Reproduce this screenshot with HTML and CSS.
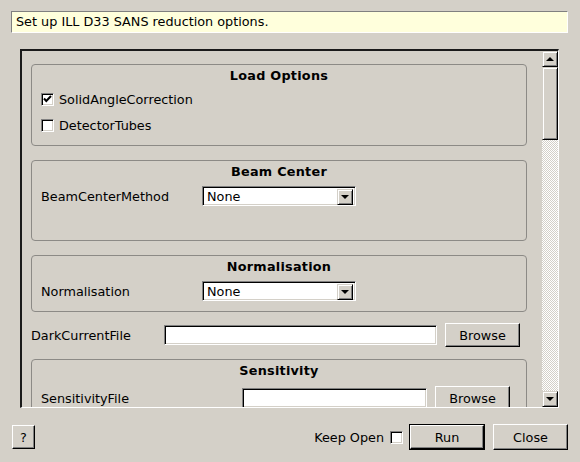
FILE: index.html
```html
<!DOCTYPE html>
<html lang="en">
<head>
    <meta charset="UTF-8">
    <title>ILL D33 SANS reduction</title>
    <link rel="stylesheet" href="styles.css">
</head>
<body>
    <div class="dialog">
        <div class="info">Set up ILL D33 SANS reduction options.</div>

        <div class="scroll">
            <div class="viewport">
                <div class="group group-load">
                    <div class="group-title">Load Options</div>
                    <label class="check-row">
                        <span class="checkbox">
                            <svg width="11" height="11" viewBox="0 0 11 11"><path d="M2 4.5 L4.3 7 L9 2" fill="none" stroke="#000" stroke-width="2"/></svg>
                        </span>
                        SolidAngleCorrection
                    </label>
                    <label class="check-row">
                        <span class="checkbox"></span>
                        DetectorTubes
                    </label>
                </div>

                <div class="group group-beam">
                    <div class="group-title">Beam Center</div>
                    <div class="field-row">
                        <span class="label label-combo">BeamCenterMethod</span>
                        <div class="combo">
                            <span class="combo-text">None</span>
                            <span class="combo-btn"><span class="arrow-down"></span></span>
                        </div>
                    </div>
                </div>

                <div class="group group-norm">
                    <div class="group-title">Normalisation</div>
                    <div class="field-row">
                        <span class="label label-combo">Normalisation</span>
                        <div class="combo">
                            <span class="combo-text">None</span>
                            <span class="combo-btn"><span class="arrow-down"></span></span>
                        </div>
                    </div>
                </div>

                <div class="file-row dark-row">
                    <span class="label label-dark">DarkCurrentFile</span>
                    <div class="line-edit edit-dark"></div>
                    <button class="btn btn-browse">Browse</button>
                </div>

                <div class="group group-sens">
                    <div class="group-title">Sensitivity</div>
                    <div class="file-row sens-row">
                        <span class="label label-sens">SensitivityFile</span>
                        <div class="line-edit edit-sens"></div>
                        <button class="btn btn-browse">Browse</button>
                    </div>
                </div>
            </div>

            <div class="scrollbar">
                <div class="sb-btn"><span class="arrow-up"></span></div>
                <div class="sb-handle"></div>
                <div class="sb-trough"></div>
                <div class="sb-btn"><span class="arrow-down"></span></div>
            </div>
        </div>

        <div class="button-bar">
            <button class="btn btn-help">?</button>
            <div class="spacer"></div>
            <span class="keep-label">Keep Open</span>
            <span class="checkbox keep-box"></span>
            <div class="default-frame"><button class="btn btn-run">Run</button></div>
            <button class="btn btn-close">Close</button>
        </div>
    </div>
</body>
</html>
```

FILE: styles.css
```css
* {
    margin: 0;
    padding: 0;
    box-sizing: border-box;
}

body {
    background: #d4d0c8;
    font-family: 'DejaVu Sans', Verdana, sans-serif;
    font-size: 12.8px;
    color: #000;
}

.dialog {
    width: 580px;
    height: 462px;
    padding: 11px 12px 0 11px;
    display: flex;
    flex-direction: column;
}

.info {
    height: 22px;
    line-height: 20px;
    padding-left: 4px;
    background: #ffffdc;
    border: 1px solid;
    border-color: #808080 #fff #fff #808080;
}

/* scroll area */
.scroll {
    margin: 16px 0 0 9px;
    width: 539px;
    height: 359px;
    display: flex;
    border-style: solid;
    border-width: 2px 1px 1px 2px;
    border-color: #1a1a1a #fff #fff #1a1a1a;
}

.viewport {
    width: 520px;
    height: 356px;
    overflow: hidden;
    padding: 13px 0 0 9px;
}

.scrollbar {
    width: 16px;
    display: flex;
    flex-direction: column;
}

.sb-btn {
    height: 16px;
    display: flex;
    align-items: center;
    justify-content: center;
    background: #d4d0c8;
    border: 1px solid;
    border-color: #d4d0c8 #000 #000 #d4d0c8;
    box-shadow: inset 1px 1px #fff, inset -1px -1px #808080;
}

.sb-handle {
    height: 73px;
    background: #d4d0c8;
    border: 1px solid;
    border-color: #d4d0c8 #000 #000 #d4d0c8;
    box-shadow: inset 1px 1px #fff, inset -1px -1px #808080;
}

.sb-trough {
    flex: 1;
    background: repeating-conic-gradient(#fff 0 25%, #d4d0c8 0 50%) 0 0 / 2px 2px;
}

.arrow-up,
.arrow-down {
    width: 0;
    height: 0;
    border-left: 4px solid transparent;
    border-right: 4px solid transparent;
}

.arrow-up {
    border-bottom: 4px solid #000;
}

.arrow-down {
    border-top: 4px solid #000;
}

/* group boxes */
.group {
    width: 496px;
    border: 1px solid #8c8a86;
    border-radius: 4px;
    padding: 2px 0 0 9px;
}

.group-title {
    text-align: center;
    font-weight: bold;
    letter-spacing: 0.25px;
    line-height: 15px;
    padding-top: 1px;
    margin: 0 0 -1px -9px;
}

.group-load {
    height: 82px;
}

.group-beam {
    height: 81px;
    margin-top: 14px;
}

.group-norm {
    height: 57px;
    margin-top: 14px;
}

.group-sens {
    height: 90px;
    margin-top: 12px;
}

.check-row {
    display: flex;
    align-items: center;
    height: 26px;
    gap: 5px;
}

.check-row:first-of-type {
    margin-top: 4px;
}

.checkbox {
    width: 13px;
    height: 13px;
    background: #fff;
    border: 1px solid;
    border-color: #808080 #fff #fff #808080;
    box-shadow: inset 1px 1px #000, inset -1px -1px #d4d0c8;
    display: flex;
    align-items: center;
    justify-content: center;
}

.checkbox svg {
    display: block;
}

.field-row {
    display: flex;
    align-items: center;
    height: 20px;
    margin-top: 8px;
}

.label {
    line-height: 15px;
    padding-top: 1px;
}

.label-combo {
    width: 161px;
}

.combo {
    width: 154px;
    height: 20px;
    background: #fff;
    display: flex;
    border: 1px solid;
    border-color: #808080 #fff #fff #808080;
    box-shadow: inset 1px 1px #000, inset -1px -1px #d4d0c8;
    padding: 2px;
}

.combo-text {
    flex: 1;
    line-height: 16px;
    padding-left: 2px;
}

.combo-btn {
    width: 16px;
    height: 16px;
    display: flex;
    align-items: center;
    justify-content: center;
    background: #d4d0c8;
    border: 1px solid;
    border-color: #d4d0c8 #000 #000 #d4d0c8;
    box-shadow: inset 1px 1px #fff, inset -1px -1px #808080;
}

/* file rows */
.file-row {
    display: flex;
    align-items: center;
    height: 24px;
}

.dark-row {
    margin-top: 11px;
    width: 496px;
}

.sens-row {
    margin-top: 9px;
}

.label-dark {
    width: 133px;
}

.label-sens {
    width: 201px;
}

.line-edit {
    height: 20px;
    background: #fff;
    border: 1px solid;
    border-color: #808080 #fff #fff #808080;
    box-shadow: inset 1px 1px #000, inset -1px -1px #d4d0c8;
    margin-right: 8px;
}

.edit-dark {
    width: 273px;
}

.edit-sens {
    width: 185px;
}

.btn {
    font-family: inherit;
    font-size: 12.8px;
    color: #000;
    background: #d4d0c8;
    border: 1px solid;
    border-color: #fff #000 #000 #fff;
    box-shadow: inset -1px -1px #808080;
    text-align: center;
}

.btn-browse {
    width: 75px;
    height: 24px;
}

/* bottom buttons */
.button-bar {
    display: flex;
    align-items: center;
    height: 26px;
    margin: 16px 0 0 1px;
}

.btn-help {
    width: 23px;
    height: 24px;
}

.spacer {
    flex: 1;
}

.keep-label {
    margin-right: 6px;
}

.keep-box {
    margin-right: 6px;
}

.default-frame {
    border: 1px solid #000;
    margin-right: 8px;
}

.btn-run {
    display: block;
    width: 74px;
    height: 24px;
}

.btn-close {
    width: 75px;
    height: 26px;
}
```
